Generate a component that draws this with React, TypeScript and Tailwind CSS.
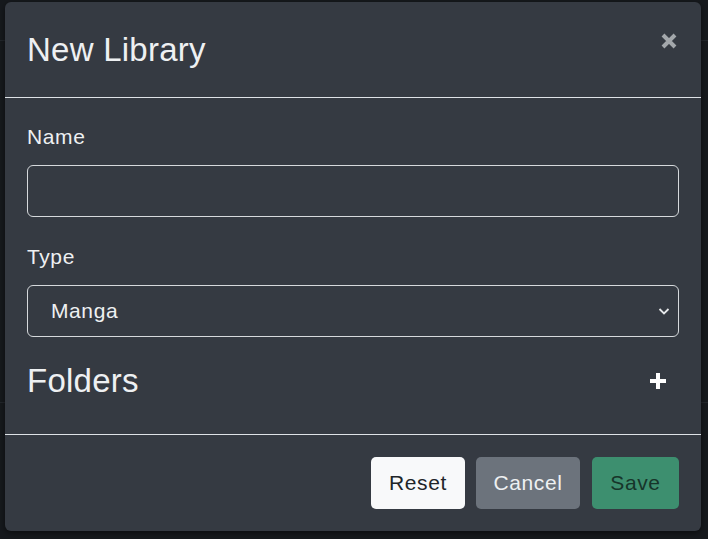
import React from "react";

export default function App() {
  return (
    <div
      className="w-[708px] h-[539px] bg-[#16191d] relative overflow-hidden"
      style={{ fontFamily: '"Liberation Sans", Arial, sans-serif' }}
    >
      <div className="absolute left-0 right-0 top-[40px] h-px bg-[#22262b]" />
      <div className="absolute left-0 right-0 top-[402px] h-px bg-[#22262b]" />
      <div className="absolute left-[5px] top-[2px] w-[696px] h-[529px] bg-[#353a42] rounded-[6px] flex flex-col shadow-[0_2px_6px_rgba(0,0,0,0.5)]">
        <div className="h-[96px] shrink-0 border-b border-[#dee2e6] flex items-center justify-between pl-[22px] pr-[23px]">
          <h1 className="text-[33px] leading-[40px] tracking-[0.25px] text-[#eef0f2] font-normal">New Library</h1>
          <svg width="18" height="18" viewBox="0 0 18 18" className="mt-[-17px]">
            <path d="M3 3 L15 15 M15 3 L3 15" stroke="#a3a7ab" strokeWidth="4" strokeLinecap="butt" />
          </svg>
        </div>
        <div className="flex-1 px-[22px] pt-[24px]">
          <div className="text-[21px] leading-[30px] tracking-[0.6px] text-[#eef0f2] mb-[13px]">Name</div>
          <div className="h-[52px] border border-[#d6d9dc] rounded-[6px]" />
          <div className="text-[21px] leading-[30px] tracking-[0.6px] text-[#eef0f2] mt-[25px] mb-[13px]">Type</div>
          <div className="h-[52px] border border-[#d6d9dc] rounded-[6px] flex items-center justify-between pl-[23px] pr-[8px]">
            <span className="text-[21px] tracking-[0.6px] text-[#eef0f2]">Manga</span>
            <svg width="12" height="10" viewBox="0 0 12 10">
              <path d="M1.5 3 L6 7.5 L10.5 3" stroke="#e6e8ea" strokeWidth="1.8" fill="none" />
            </svg>
          </div>
          <div className="mt-[24px] flex items-center justify-between">
            <span className="text-[33px] leading-[40px] tracking-[0.25px] text-[#eef0f2]">Folders</span>
            <svg width="18" height="18" viewBox="0 0 18 18" className="mr-[12px] mt-0">
              <path d="M9 1 V17 M1 9 H17" stroke="#ffffff" strokeWidth="4" />
            </svg>
          </div>
        </div>
        <div className="h-[97px] shrink-0 border-t border-[#dee2e6] flex items-center justify-end gap-[11px] px-[22px]">
          <button className="h-[52px] w-[94px] rounded-[5px] bg-[#f8f9fa] text-[#212529] text-[21px] tracking-[0.6px]">Reset</button>
          <button className="h-[52px] w-[104px] rounded-[5px] bg-[#6c737c] text-[#eef0f2] text-[21px] tracking-[0.6px]">Cancel</button>
          <button className="h-[52px] w-[87px] ml-px rounded-[5px] bg-[#3d8f6f] text-[#17352a] text-[21px] tracking-[0.6px]">Save</button>
        </div>
      </div>
    </div>
  );
}
